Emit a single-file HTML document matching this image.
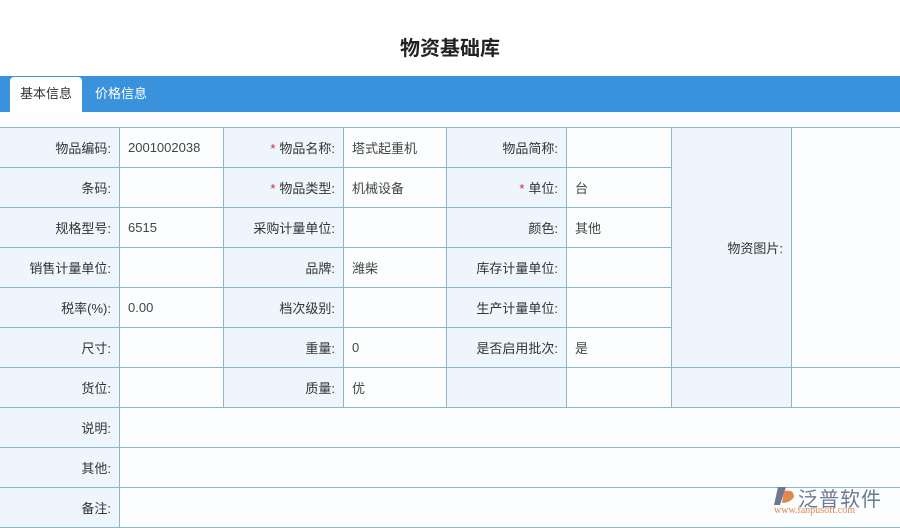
<!DOCTYPE html>
<html><head><meta charset="utf-8"><style>
body{margin:0;width:900px;height:528px;background:#fff;font-family:"Liberation Sans","Noto Sans CJK SC",sans-serif;overflow:hidden;position:relative}
.title{position:absolute;top:32px;left:0;width:900px;text-align:center;font-size:20px;font-weight:bold;color:#222}
.bar{position:absolute;top:76px;left:0;width:900px;height:36px;background:#3b92dc}
.tab1{position:absolute;top:77px;left:10px;width:72px;height:35px;background:#fff;border-radius:4px 4px 0 0;font-size:13px;color:#333;text-align:center;line-height:33px}
.tab2{position:absolute;top:77px;left:95px;font-size:13px;color:#fff;line-height:33px}
.main{position:absolute;top:112px;left:0;width:900px;height:416px;background:#fbfdfe}
table{position:absolute;top:127px;left:-1px;width:904px;border-collapse:collapse;table-layout:fixed;font-size:13px;color:#333}
td{border:1px solid #8fb5c9;height:39px;padding:0 8px;white-space:nowrap}
td.l{background:#eef5fc;text-align:right}
td.v{background:#fbfdfe;color:#444}
.s{color:#d22;margin-right:4px}
.logo{position:absolute;left:772px;top:483px}
</style></head><body>
<div class="title">物资基础库</div>
<div class="bar"></div>
<div class="tab1">基本信息</div>
<div class="tab2">价格信息</div>
<div class="main"></div>
<table>
<colgroup><col style="width:120px"><col style="width:104px"><col style="width:120px"><col style="width:103px"><col style="width:120px"><col style="width:105px"><col style="width:120px"><col style="width:112px"></colgroup>
<tr><td class="l">物品编码:</td><td class="v">2001002038</td><td class="l"><span class="s">*</span>物品名称:</td><td class="v">塔式起重机</td><td class="l">物品简称:</td><td class="v"></td><td class="l" rowspan="6">物资图片:</td><td class="v" rowspan="6"></td></tr>
<tr><td class="l">条码:</td><td class="v"></td><td class="l"><span class="s">*</span>物品类型:</td><td class="v">机械设备</td><td class="l"><span class="s">*</span>单位:</td><td class="v">台</td></tr>
<tr><td class="l">规格型号:</td><td class="v">6515</td><td class="l">采购计量单位:</td><td class="v"></td><td class="l">颜色:</td><td class="v">其他</td></tr>
<tr><td class="l">销售计量单位:</td><td class="v"></td><td class="l">品牌:</td><td class="v">潍柴</td><td class="l">库存计量单位:</td><td class="v"></td></tr>
<tr><td class="l">税率(%):</td><td class="v">0.00</td><td class="l">档次级别:</td><td class="v"></td><td class="l">生产计量单位:</td><td class="v"></td></tr>
<tr><td class="l">尺寸:</td><td class="v"></td><td class="l">重量:</td><td class="v">0</td><td class="l">是否启用批次:</td><td class="v">是</td></tr>
<tr><td class="l">货位:</td><td class="v"></td><td class="l">质量:</td><td class="v">优</td><td class="l"></td><td class="v"></td><td class="l"></td><td class="v"></td></tr>
<tr><td class="l">说明:</td><td class="v" colspan="7"></td></tr>
<tr><td class="l">其他:</td><td class="v" colspan="7"></td></tr>
<tr><td class="l">备注:</td><td class="v" colspan="7"></td></tr>
</table>
<div class="logo">
<svg width="24" height="22" style="position:absolute;left:0;top:2px"><path d="M6 2 L14 2 L8 20 L2 20 Z" fill="#6b7a8f"/><path d="M12 6 Q22 4 22 12 Q18 18 10 18 Z" fill="#e0894f"/></svg>
<div style="position:absolute;left:26px;top:0;font-size:20px;color:#6b7a8f;white-space:nowrap;letter-spacing:1px">泛普软件</div>
<div style="position:absolute;left:2px;top:22px;font-size:10px;color:#e0894f;font-family:'Liberation Serif',serif;white-space:nowrap">www.fanpusoft.com</div>
</div>
</body></html>
